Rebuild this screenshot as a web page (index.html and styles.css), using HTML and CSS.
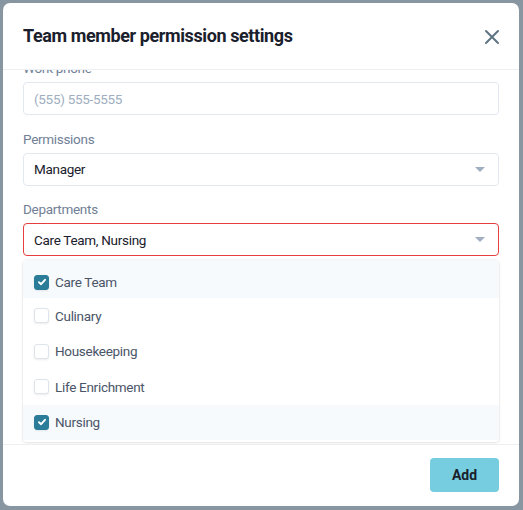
FILE: index.html
```html
<!DOCTYPE html>
<html>
<head>
<meta charset="utf-8">
<link rel="stylesheet" href="styles.css">
</head>
<body>
<div class="backdrop">
  <div class="modal">
    <div class="modal-header">
      <h2 class="title">Team member permission settings</h2>
      <button class="close" aria-label="Close">
        <svg width="16" height="16" viewBox="0 0 16 16"><path d="M2 2 L14 14 M14 2 L2 14" stroke="#5f7482" stroke-width="2" stroke-linecap="round" fill="none"/></svg>
      </button>
    </div>
    <div class="modal-body">
      <div class="form">
        <div class="field">
          <label class="label">Work phone</label>
          <div class="input placeholder">(555) 555-5555</div>
        </div>
        <div class="field">
          <label class="label">Permissions</label>
          <div class="input select"><span>Manager</span><span class="caret"></span></div>
        </div>
        <div class="field">
          <label class="label">Departments</label>
          <div class="input select invalid"><span>Care Team, Nursing</span><span class="caret"></span></div>
          <ul class="menu">
            <li class="option selected"><span class="check on"><svg width="10" height="10" viewBox="0 0 10 10"><path d="M2 5.2 L4.1 7.2 L8 2.8" stroke="#fff" stroke-width="1.9" fill="none" stroke-linecap="round" stroke-linejoin="round"/></svg></span>Care Team</li>
            <li class="option"><span class="check"></span>Culinary</li>
            <li class="option"><span class="check"></span>Housekeeping</li>
            <li class="option"><span class="check"></span>Life Enrichment</li>
            <li class="option selected"><span class="check on"><svg width="10" height="10" viewBox="0 0 10 10"><path d="M2 5.2 L4.1 7.2 L8 2.8" stroke="#fff" stroke-width="1.9" fill="none" stroke-linecap="round" stroke-linejoin="round"/></svg></span>Nursing</li>
          </ul>
        </div>
      </div>
    </div>
    <div class="modal-footer">
      <button class="btn-add">Add</button>
    </div>
  </div>
</div>
</body>
</html>
```
FILE: styles.css
```css
* { box-sizing: border-box; }
html, body { margin: 0; padding: 0; }
body {
  font-family: Roboto, "Liberation Sans", Arial, sans-serif;
  background: #8796a1;
  width: 523px;
  height: 510px;
  overflow: hidden;
}
.backdrop {
  padding: 3px 4px 4px 3px;
  height: 510px;
}
.modal {
  background: #fff;
  border-radius: 7px;
  height: 503px;
  display: flex;
  flex-direction: column;
  overflow: hidden;
}
.modal-header {
  height: 67px;
  flex: none;
  display: flex;
  align-items: center;
  justify-content: space-between;
  padding: 0 19px 0 20px;
  border-bottom: 1px solid #edf0f3;
}
.title {
  margin: 0;
  font-size: 18px;
  font-weight: 700;
  letter-spacing: -0.4px;
  color: #1a202c;
  margin-top: -2px;
}
.close {
  background: none;
  border: 0;
  padding: 0;
  width: 16px;
  height: 16px;
  margin-top: 2px;
  cursor: pointer;
}
.close svg { display: block; }
.modal-body {
  flex: 1;
  overflow: hidden;
  padding: 0 20px;
}
.form {
  margin-top: -12px;
  display: flex;
  flex-direction: column;
  gap: 13.5px;
}
.field { display: flex; flex-direction: column; }
.label {
  font-size: 13.5px;
  letter-spacing: -0.3px;
  line-height: 20px;
  color: #718096;
  margin-bottom: 4px;
}
.input {
  height: 33px;
  border: 1px solid #e2e8f0;
  border-radius: 4px;
  padding: 0 10px;
  display: flex;
  align-items: center;
  font-size: 13.5px;
  letter-spacing: -0.3px;
  color: #1a202c;
}
.placeholder { color: #a0aec0; }
.select { justify-content: space-between; padding-right: 13px; }
.invalid { border-color: #e53e3e; }
.caret {
  width: 0; height: 0;
  border-left: 5px solid transparent;
  border-right: 5px solid transparent;
  border-top: 5px solid #a0aec0;
}
.menu {
  list-style: none;
  margin: 4px 0 0;
  padding: 0 0 2px;
  border-radius: 4px;
  box-shadow: 0 0 0 1px rgba(0,0,0,0.04), 0 2px 4px rgba(0,0,0,0.06);
  overflow: hidden;
}
.option {
  height: 35.5px;
  display: flex;
  align-items: center;
  padding-left: 11px;
  font-size: 13.5px;
  letter-spacing: -0.3px;
  color: #4a5568;
}
.option:first-child { height: 38px; padding-top: 6px; }
.option.selected { background: #f7fafc; }
.check {
  width: 15px;
  height: 15px;
  border-radius: 3px;
  margin-right: 6px;
  background: #fff;
  border: 1px solid #dfe4ea;
  box-shadow: 0 1px 2px rgba(0,0,0,0.08);
  display: flex;
  align-items: center;
  justify-content: center;
}
.check.on { background: #2a7c98; border-color: #2a7c98; }
.check svg { display: block; }
.modal-footer {
  height: 62px;
  flex: none;
  border-top: 1px solid #edf0f3;
  display: flex;
  align-items: center;
  justify-content: flex-end;
  padding: 0 20px;
}
.btn-add {
  width: 69px;
  height: 34px;
  border: 0;
  border-radius: 4px;
  background: #76cddf;
  color: #1a202c;
  font-family: inherit;
  font-size: 14px;
  font-weight: 700;
  margin-top: -2px;
}
```
